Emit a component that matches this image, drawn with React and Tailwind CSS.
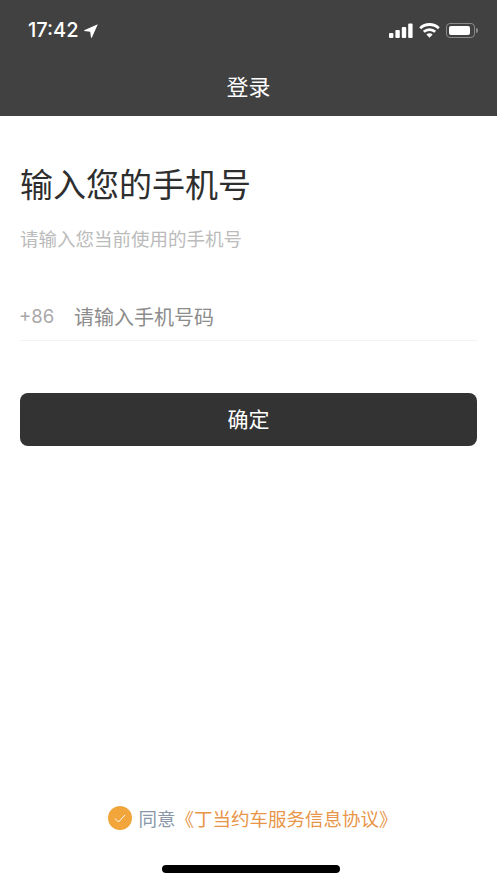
import { useState } from 'react';

const cjk = 'font-["Noto_Sans_CJK_SC","Noto_Sans",sans-serif]';

// Status bar glyphs
function LocationArrow() {
    return (
        <svg width="14" height="14" viewBox="0 0 14 14" className="ml-[5px] mt-[1px]">
            <path d="M13.8 0.2 L0.2 6.2 L0.2 7 L6.2 7.8 L7 13.8 L7.8 13.8 Z" fill="#fff" />
        </svg>
    );
}

function Signal() {
    return (
        <svg width="24" height="15" viewBox="0 0 24 15">
            <rect x="0" y="10" width="4.4" height="5" rx="1" fill="#fff" />
            <rect x="6.4" y="7" width="4.4" height="8" rx="1" fill="#fff" />
            <rect x="12.8" y="4" width="4.4" height="11" rx="1" fill="#fff" />
            <rect x="19.2" y="0.5" width="4.4" height="14.5" rx="1" fill="#fff" />
        </svg>
    );
}

function Wifi() {
    return (
        <svg width="21" height="15" viewBox="0 0 21 15" fill="none" stroke="#fff" strokeWidth="2.8">
            <path d="M1.2 5.2 A13.5 13.5 0 0 1 19.8 5.2" />
            <path d="M4.8 8.8 A8.4 8.4 0 0 1 16.2 8.8" />
            <path d="M10.5 14.8 L7.4 11.6 A4.4 4.4 0 0 1 13.6 11.6 Z" fill="#fff" stroke="none" />
        </svg>
    );
}

function Battery() {
    return (
        <div className="flex items-center">
            <div className="w-[29px] h-[15px] rounded-[4px] border border-[#8a8a8a] p-[2px]">
                <div className="w-[21px] h-full rounded-[2px] bg-white" />
            </div>
            <div className="w-[2px] h-[5px] ml-[1px] rounded-r-sm bg-[#8a8a8a]" />
        </div>
    );
}

export default function App() {
    const [phone, setPhone] = useState('');

    return (
        <div className={`w-[497px] h-[883px] bg-white flex flex-col overflow-hidden ${cjk}`}>
            {/* Header */}
            <div className="h-[116px] bg-[#414141] shrink-0 flex flex-col">
                <div className="h-[60px] flex items-center justify-between pl-[28px] pr-[19px]">
                    <div className="flex items-center">
                        <span className="text-white text-[20px] font-medium font-['Inter',sans-serif]">17:42</span>
                        <LocationArrow />
                    </div>
                    <div className="flex items-center gap-[6px]">
                        <Signal />
                        <Wifi />
                        <Battery />
                    </div>
                </div>
                <div className="text-center text-white text-[22px] leading-[30px] mt-[10px]">登录</div>
            </div>

            {/* Form */}
            <div className="flex-1 flex flex-col px-[20px]">
                <h1 className="text-[#2e2e2e] text-[33px] leading-[44px] font-normal mt-[45px]">输入您的手机号</h1>
                <p className="text-[#bbbbbb] text-[18.5px] leading-[26px] mt-[20px]">请输入您当前使用的手机号</p>

                <div className="flex items-center h-[44px] mt-[46px] border-b border-[#f3f3f3] pb-[3px]">
                    <span className="text-[#a8a8a8] text-[18.5px] w-[54px] ml-[-1px] mr-[1px] font-['Inter',sans-serif]">+86</span>
                    <input
                        value={phone}
                        onChange={(e) => setPhone(e.target.value)}
                        placeholder="请输入手机号码"
                        className="flex-1 min-w-0 outline-none text-[20px] text-[#333] placeholder:text-[#8c8c8c]"
                    />
                </div>

                <button className="mt-[52px] h-[53px] rounded-[8px] bg-[#333333] text-white text-[21px] pb-[2px]">确定</button>

                {/* Agreement */}
                <div className="mt-auto mb-[52px] pl-[9px] flex items-center justify-center">
                    <div className="w-[24px] h-[24px] rounded-full bg-[#f2a53a] flex items-center justify-center mr-[6px]">
                        <svg width="12" height="9" viewBox="0 0 12 9" fill="none" stroke="#fff" strokeWidth="1">
                            <path d="M1 4.5 L4.5 8 L11 1" />
                        </svg>
                    </div>
                    <span className="text-[#8a97a8] text-[18.5px] leading-[26px]">同意</span>
                    <span className="text-[#e89548] text-[18.5px] leading-[26px]">《丁当约车服务信息协议》</span>
                </div>
            </div>

            {/* Home indicator */}
            <div className="absolute left-[162px] top-[865px] w-[178px] h-[8px] rounded-full bg-black" />
        </div>
    );
}
